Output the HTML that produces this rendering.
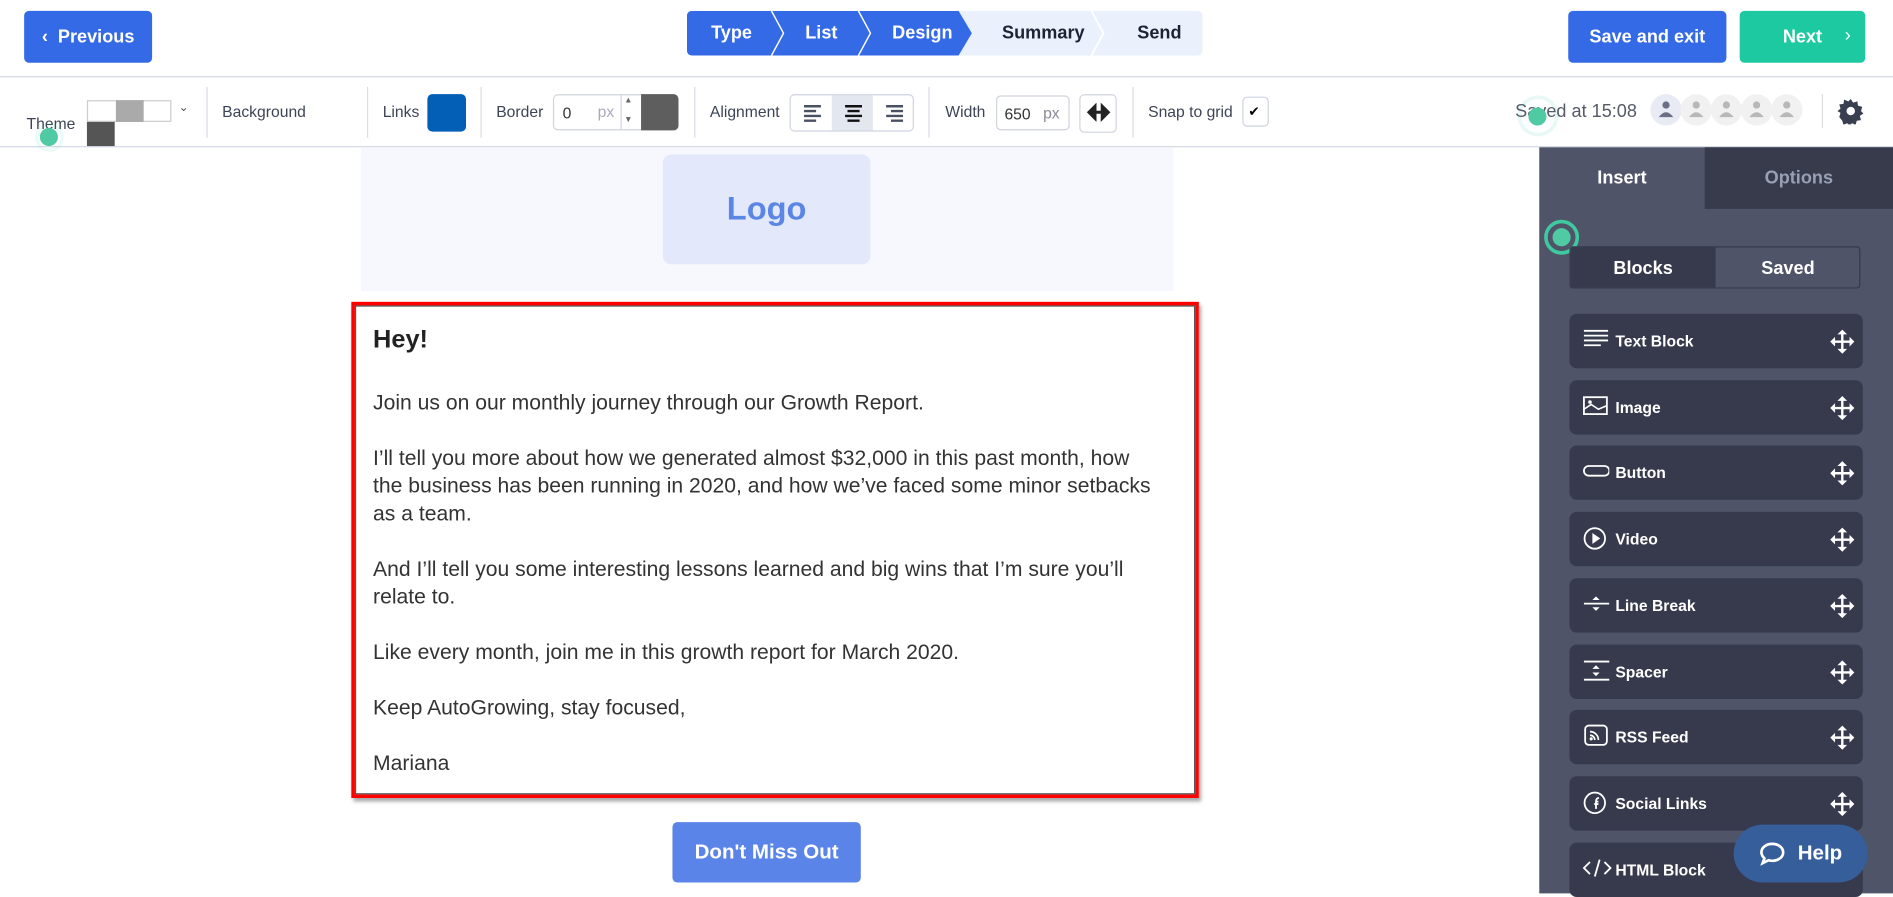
<!DOCTYPE html>
<html><head><meta charset="utf-8"><style>
*{box-sizing:border-box;margin:0;padding:0}
body{width:1893px;height:893px;overflow:hidden;background:#fff;font-family:"Liberation Sans",sans-serif}
#w{width:1568px;height:740px;transform:scale(1.20727);transform-origin:0 0;position:relative}
.a{position:absolute}
.btn{position:absolute;color:#fff;font-weight:bold;font-size:15px;display:flex;align-items:center;justify-content:center;border-radius:4px}
.tb{position:absolute;top:64px;height:57px;font-size:13px;color:#3d4456;display:flex;align-items:center}
.sep{position:absolute;top:72px;width:1px;height:42px;background:#d8dce6}
.item{position:absolute;left:1300px;width:243px;height:45px;background:#363a4c;border-radius:6px;color:#fff;font-weight:bold;font-size:13px;display:flex;align-items:center}
.item svg.i{position:absolute;left:11px;top:12px}
.item span{position:absolute;left:38px}
p{margin:0 0 23px}
</style></head><body><div id="w">
<div class="btn" style="left:20px;top:9px;width:106px;height:43px;background:#356ae6">‹&nbsp;&nbsp;Previous</div>
<div class="a" style="left:569px;top:9px;width:427px;height:37px;background:#eaf1fd;border-radius:4px;overflow:hidden">
<svg width="427" height="37" class="a" style="left:0;top:0"><path d="M0 0H225L236 18.5L225 37H0Z" fill="#356ae6"/><path d="M70 0L80 18.5L70 37M142 0L152 18.5L142 37" stroke="#fff" stroke-width="1.2" fill="none"/><path d="M335 0L345 18.5L335 37" stroke="#fff" stroke-width="1.5" fill="none"/></svg>
<div class="a" style="left:20px;top:10px;color:#fff;font-weight:bold;font-size:15px">Type</div>
<div class="a" style="left:98px;top:10px;color:#fff;font-weight:bold;font-size:15px">List</div>
<div class="a" style="left:170px;top:10px;color:#fff;font-weight:bold;font-size:15px">Design</div>
<div class="a" style="left:261px;top:10px;color:#1e2233;font-weight:bold;font-size:15px">Summary</div>
<div class="a" style="left:373px;top:10px;color:#1e2233;font-weight:bold;font-size:15px">Send</div>
</div>
<div class="btn" style="left:1299px;top:9px;width:131px;height:43px;background:#356ae6">Save and exit</div>
<div class="btn" style="left:1441px;top:9px;width:104px;height:43px;background:#1dc9a0">Next<span class="a" style="right:12px;top:12px;font-weight:normal">›</span></div>
<div class="a" style="left:0;top:63px;width:1568px;height:1px;background:#d4d8e4"></div>
<div class="a" style="left:0;top:121px;width:1568px;height:1px;background:#d4d8e4"></div>
<div class="a" style="left:22px;top:95px;font-size:13px;color:#3d4456">Theme</div>
<div class="a" style="left:29px;top:102px;width:24px;height:24px;border-radius:50%;border:3px solid rgba(29,201,160,.08)"></div>
<div class="a" style="left:33px;top:106px;width:15px;height:15px;border-radius:50%;background:#4fcaa3"></div>
<div class="a" style="left:72px;top:83px;width:70px;height:18px;border:1px solid #ccc;background:#fff"></div>
<div class="a" style="left:96px;top:83px;width:23px;height:18px;background:#aaa"></div>
<div class="a" style="left:72px;top:101px;width:23px;height:20px;background:#555"></div>
<div class="a" style="left:148px;top:84px;font-size:10px;color:#555">⌄</div>
<div class="sep" style="left:171px"></div>
<div class="tb" style="left:184px">Background</div>
<div class="sep" style="left:304px"></div>
<div class="tb" style="left:317px">Links</div>
<div class="a" style="left:354px;top:78px;width:32px;height:31px;background:#035eb6;border-radius:4px"></div>
<div class="sep" style="left:398px"></div>
<div class="tb" style="left:411px">Border</div>
<div class="a" style="left:458px;top:78px;width:104px;height:30px;border:1px solid #d0d4de;border-radius:4px;background:#fff"></div>
<div class="a" style="left:466px;top:86px;font-size:13px;color:#333">0</div>
<div class="a" style="left:495px;top:85px;font-size:13px;color:#aab">px</div>
<div class="a" style="left:514px;top:79px;width:1px;height:28px;background:#d0d4de"></div>
<div class="a" style="left:517px;top:80px;font-size:7px;color:#666">▲</div>
<div class="a" style="left:517px;top:96px;font-size:7px;color:#666">▼</div>
<div class="a" style="left:531px;top:78px;width:31px;height:30px;background:#5e5e5e;border-radius:0 4px 4px 0"></div>
<div class="sep" style="left:575px"></div>
<div class="tb" style="left:588px">Alignment</div>
<div class="a" style="left:654px;top:78px;width:103px;height:31px;border:1px solid #cfd4e0;border-radius:4px;overflow:hidden;background:#fff">
<div class="a" style="left:34px;top:0;width:34px;height:31px;background:#e3e7f0"></div>
<svg class="a" style="left:0;top:0" width="103" height="31"><g stroke="#4a5063" stroke-width="2"><path d="M11 9h14M11 13h10M11 17h14M11 21h10"/><path d="M45 9h14M47 13h10M45 17h14M47 21h10" stroke="#111"/><path d="M79 9h14M83 13h10M79 17h14M83 21h10"/></g></svg></div>
<div class="sep" style="left:769px"></div>
<div class="tb" style="left:783px">Width</div>
<div class="a" style="left:825px;top:79px;width:61px;height:29px;border:1px solid #d0d4de;border-radius:4px"></div>
<div class="a" style="left:832px;top:87px;font-size:13px;color:#333">650</div>
<div class="a" style="left:864px;top:86px;font-size:13px;color:#889">px</div>
<div class="a" style="left:894px;top:78px;width:31px;height:32px;border:1px solid #d0d4de;border-radius:4px"></div>
<svg class="a" style="left:900px;top:85px" width="20" height="16"><path d="M2 8h16M2 8l5-5v10zM18 8l-5-5v10z" stroke="#222" stroke-width="2.5" fill="#222"/></svg>
<div class="sep" style="left:938px"></div>
<div class="tb" style="left:951px">Snap to grid</div>
<div class="a" style="left:1029px;top:80px;width:22px;height:25px;border:1px solid #cfd4e0;border-radius:4px;font-size:11px;padding:5px 0 0 4px">✔</div>
<div class="tb" style="left:1255px;font-size:15px;color:#555a68">Saved at 15:08</div>
<div class="a" style="left:1257px;top:79px;width:34px;height:34px;border-radius:50%;border:3px solid rgba(29,201,160,.1)"></div>
<div class="a" style="left:1266px;top:89px;width:15px;height:15px;border-radius:50%;background:#4fcaa3"></div>
<svg class="a" style="left:1366px;top:77px" width="130" height="28"><g><circle cx="14" cy="14" r="13" fill="#e9ebf4"/><circle cx="39" cy="14" r="13" fill="#f1f1f1"/><circle cx="64" cy="14" r="13" fill="#f1f1f1"/><circle cx="89" cy="14" r="13" fill="#f1f1f1"/><circle cx="114" cy="14" r="13" fill="#f1f1f1"/></g><g fill="#b8b8b8"><circle cx="14" cy="10" r="3" fill="#6a6f86"/><path d="M8 20q6-8 12 0z" fill="#6a6f86"/><circle cx="39" cy="10" r="3"/><path d="M33 20q6-8 12 0z"/><circle cx="64" cy="10" r="3"/><path d="M58 20q6-8 12 0z"/><circle cx="89" cy="10" r="3"/><path d="M83 20q6-8 12 0z"/><circle cx="114" cy="10" r="3"/><path d="M108 20q6-8 12 0z"/></g></svg>
<div class="a" style="left:1509px;top:78px;width:1px;height:28px;background:#ddd"></div>
<svg class="a" style="left:1522px;top:81px" width="22" height="22" viewBox="0 0 22 22"><path d="M11 1l2 3 3.5-1 .5 3.5 3.5 1-1 3.5 2 2-3 2 1 3.5-3.5.5-1 3.5-3-1.5-2 2.5-2-2.5-3 1.5-1-3.5L1.5 16l1-3.5L0 11l2.5-2-1-3.5L5 5l.5-3.5L9 3z" fill="#3a3f50"/><circle cx="11" cy="11" r="3.5" fill="#fff"/></svg>
<div class="a" style="left:299px;top:122px;width:673px;height:119px;background:#f7f8fd"></div>
<div class="a" style="left:549px;top:128px;width:172px;height:91px;background:#e3e9fb;border-radius:7px;display:flex;align-items:center;justify-content:center;color:#5b86e5;font-weight:bold;font-size:27px">Logo</div>
<div class="a" style="left:291px;top:250px;width:702px;height:411px;border:3px solid #f00;box-shadow:2px 3px 3px rgba(0,0,0,.35)"><div style="position:absolute;inset:0;border:1px solid #555"></div></div>
<div class="a" style="left:309px;top:268px;width:645px;font-size:17.5px;line-height:23px;color:#333">
<div style="font-weight:bold;font-size:21px;color:#222;margin:0 0 26px;line-height:28px">Hey!</div>
<p>Join us on our monthly journey through our Growth Report.</p>
<p>I’ll tell you more about how we generated almost $32,000 in this past month, how the business has been running in 2020, and how we’ve faced some minor setbacks as a team.</p>
<p>And I’ll tell you some interesting lessons learned and big wins that I’m sure you’ll relate to.</p>
<p>Like every month, join me in this growth report for March 2020.</p>
<p>Keep AutoGrowing, stay focused,</p>
<p>Mariana</p></div>
<div class="btn" style="left:557px;top:681px;width:156px;height:50px;background:#5b84e8;font-size:17px">Don't Miss Out</div>
<div class="a" style="left:1275px;top:122px;width:293px;height:618px;background:#4f5468"></div>
<div class="a" style="left:1412px;top:122px;width:156px;height:51px;background:#373b4c;color:#9aa0b4;font-weight:bold;font-size:15px;display:flex;align-items:center;justify-content:center">Options</div>
<div class="a" style="left:1275px;top:122px;width:137px;height:51px;color:#fff;font-weight:bold;font-size:15px;display:flex;align-items:center;justify-content:center">Insert</div>
<div class="a" style="left:1279px;top:182px;width:29px;height:29px;border-radius:50%;border:3px solid #3fc9a0"></div>
<div class="a" style="left:1286px;top:189px;width:15px;height:15px;border-radius:50%;background:#4fcaa3"></div>
<div class="a" style="left:1300px;top:204px;width:241px;height:35px;border:1px solid #363a4c;border-radius:3px;overflow:hidden"><div class="a" style="left:0;top:0;width:120px;height:35px;background:#363a4c"></div>
<div class="a" style="left:0;top:9px;width:120px;text-align:center;color:#fff;font-weight:bold;font-size:15px">Blocks</div><div class="a" style="left:120px;top:9px;width:120px;text-align:center;color:#fff;font-weight:bold;font-size:15px">Saved</div></div>
<div class="item" style="top:260px"><svg class="i" width="22" height="18"><path d="M1 2h20M1 6h20M1 10h20M1 14h14" stroke="#fff" stroke-width="1.5"/></svg><span>Text Block</span></div>
<div class="item" style="top:315px"><svg class="i" width="22" height="18"><rect x="1" y="2" width="19" height="14" stroke="#fff" fill="none" stroke-width="1.5"/><path d="M1 12l6-4 6 4 7-3" stroke="#fff" fill="none" stroke-width="1.3"/><circle cx="6" cy="6" r="1.5" fill="#fff"/></svg><span>Image</span></div>
<div class="item" style="top:369px"><svg class="i" width="22" height="18"><rect x="1" y="5" width="21" height="8" rx="4" stroke="#fff" fill="none" stroke-width="1.5"/></svg><span>Button</span></div>
<div class="item" style="top:424px"><svg class="i" width="22" height="20" style="top:12px"><circle cx="10" cy="10" r="8.5" stroke="#fff" fill="none" stroke-width="1.5"/><path d="M8 5.5v9l6.5-4.5z" fill="#fff"/></svg><span>Video</span></div>
<div class="item" style="top:479px"><svg class="i" width="22" height="18"><path d="M1 9h21" stroke="#fff" stroke-width="1.5"/><path d="M8 6l3-3 3 3zM8 12l3 3 3-3z" fill="#fff"/></svg><span>Line Break</span></div>
<div class="item" style="top:534px"><svg class="i" width="22" height="20"><path d="M1 2h22M1 17h22" stroke="#fff" stroke-width="1.5"/><path d="M8 8l3-3 3 3zM8 11l3 3 3-3z" fill="#fff"/></svg><span>Spacer</span></div>
<div class="item" style="top:588px"><svg class="i" width="22" height="18"><rect x="2" y="1" width="18" height="16" rx="3" stroke="#fff" fill="none" stroke-width="1.5"/><path d="M6 6a7 7 0 0 1 7 7M6 9a4 4 0 0 1 4 4" stroke="#fff" fill="none" stroke-width="1.4"/><circle cx="7" cy="12" r="1.3" fill="#fff"/></svg><span>RSS Feed</span></div>
<div class="item" style="top:643px"><svg class="i" width="22" height="20" style="top:12px"><circle cx="10" cy="10" r="8.5" stroke="#fff" fill="none" stroke-width="1.5"/><path d="M11 15v-6h2M9.5 11h3.5M11 9q0-3 2.5-3" stroke="#fff" fill="none" stroke-width="1.5"/></svg><span>Social Links</span></div>
<div class="item" style="top:698px"><svg class="i" width="24" height="18"><path d="M6 4l-5 5 5 5M18 4l5 5-5 5M14 2l-4 14" stroke="#fff" fill="none" stroke-width="1.5"/></svg><span>HTML Block</span></div>
<svg class="a" style="left:1516px;top:273px" width="20" height="450"><g id="mv" fill="#fff"><path d="M9 2h2v16H9zM2 9h16v2H2z"/><path d="M10 0l4 4H6zM10 20l4-4H6zM0 10l4-4v8zM20 10l-4-4v8z"/></g><use href="#mv" y="55"/><use href="#mv" y="109"/><use href="#mv" y="164"/><use href="#mv" y="219"/><use href="#mv" y="274"/><use href="#mv" y="328"/><use href="#mv" y="383"/></svg>
<div class="a" style="left:1436px;top:683px;width:111px;height:48px;border-radius:24px;background:#365e9b;color:#fff;font-weight:bold;font-size:17px;display:flex;align-items:center;justify-content:center;gap:10px"><svg width="22" height="20"><path d="M11 2c5 0 9 3 9 7s-4 7-9 7c-1 0-2 0-3-.5L3 18l1.5-4C3 12.5 2 11 2 9c0-4 4-7 9-7z" stroke="#fff" stroke-width="2.2" fill="none"/></svg>Help</div>
</div></body></html>
